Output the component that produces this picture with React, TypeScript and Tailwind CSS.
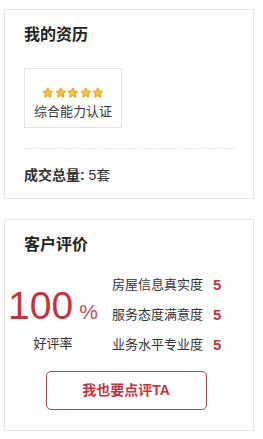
import React from "react";

const font = { fontFamily: '"Liberation Sans", "Noto Sans CJK SC", sans-serif' };

function Star() {
  return (
    <svg width="11.5" height="11.5" viewBox="0 0 24 24">
      <path
        d="M12 1.8l3.1 6.5 7.1.9-5.2 4.9 1.3 7.1L12 17.8l-6.3 3.4 1.3-7.1-5.2-4.9 7.1-.9z"
        fill="#f7c531"
        stroke="#e39a12"
        strokeWidth="2"
        strokeLinejoin="round"
      />
    </svg>
  );
}

const scores = [
  { label: "房屋信息真实度", value: 5 },
  { label: "服务态度满意度", value: 5 },
  { label: "业务水平专业度", value: 5 },
];

export default function App() {
  return (
    <div className="w-[263px] h-[439px] bg-white pt-[9px] pl-[4px]" style={font}>
      <div className="w-[250px] h-[190px] border border-[#e6e6e6] px-[19px] pt-[14px]">
        <h2 className="text-[16px] leading-[22px] font-bold text-[#222]">我的资历</h2>
        <div className="mt-[22px] w-[98px] h-[60px] border border-[#e3e3e3] flex flex-col items-center pt-[18px]">
          <div className="flex gap-[1px]">
            <Star />
            <Star />
            <Star />
            <Star />
            <Star />
          </div>
          <p className="mt-[4px] text-[13px] leading-[18px] text-[#333]">综合能力认证</p>
        </div>
        <div className="mt-[20px] w-[212px] border-t border-dashed border-[#e6e6e6]" />
        <p className="mt-[16px] text-[14px] leading-[20px] text-[#333]">
          <span className="font-bold">成交总量:</span> 5套
        </p>
      </div>

      <div className="mt-[20px] w-[250px] h-[212px] border border-[#e6e6e6] pt-[14px]">
        <h2 className="pl-[19px] text-[16px] leading-[22px] font-bold text-[#222]">客户评价</h2>
        <div className="mt-[20px] flex">
          <div className="w-[96px] flex flex-col items-center pt-[10px]">
            <div className="flex items-baseline text-[#c8323d]">
              <span className="text-[39px] leading-[40px]">100</span>
              <span className="ml-[6px] text-[21px] leading-[24px] text-[#c84a52]">%</span>
            </div>
            <p className="mt-[9px] text-[13px] leading-[18px] text-[#333]">好评率</p>
          </div>
          <div className="ml-[11px] flex flex-col gap-[12px]">
            {scores.map((s) => (
              <div key={s.label} className="flex items-center h-[18px]">
                <span className="w-[101px] text-[13px] leading-[18px] text-[#333]">{s.label}</span>
                <span className="text-[15px] font-bold text-[#c8323d]">{s.value}</span>
              </div>
            ))}
          </div>
        </div>
        <div className="mt-[17px] flex justify-center pr-[6px]">
          <button className="w-[161px] h-[39px] rounded-[5px] border border-[#a14b4b] text-[14px] font-bold text-[#c8323d]">
            我也要点评TA
          </button>
        </div>
      </div>
    </div>
  );
}
